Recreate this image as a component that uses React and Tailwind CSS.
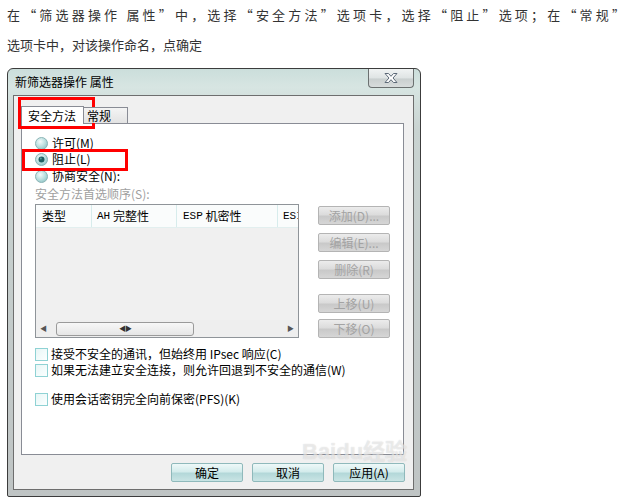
import React from 'react';

function Radio({ checked }) {
  return (
    <svg width="13" height="13" viewBox="0 0 13 13" className="shrink-0">
      <defs>
        <radialGradient id={checked ? 'rg1' : 'rg0'} cx="40%" cy="35%" r="70%">
          <stop offset="0%" stopColor="#f4fbfb" />
          <stop offset="60%" stopColor="#b9dede" />
          <stop offset="100%" stopColor="#8fc4c6" />
        </radialGradient>
      </defs>
      <circle cx="6.5" cy="6.5" r="6" fill={`url(#${checked ? 'rg1' : 'rg0'})`} stroke="#8cb4b6" strokeWidth="1" />
      {checked && <circle cx="6.5" cy="6.5" r="3" fill="#1f5f62" />}
      {checked && <circle cx="5.8" cy="5.6" r="1" fill="#5aa0a3" />}
    </svg>
  );
}

function Check() {
  return (
    <span className="w-[13px] h-[13px] shrink-0 border border-[#8fd2d4] bg-[linear-gradient(135deg,#e8f6f6,#fbffff)]" />
  );
}

function SideButton({ label }) {
  return (
    <div className="w-[72px] h-[19px] flex items-center justify-center border border-[#b4b4b4] rounded-[2px] bg-[linear-gradient(to_bottom,#ececec,#dcdcdc_45%,#c9c9c9_55%,#d6d6d6)] text-[12px] text-[#a3a3a3]">
      {label}
    </div>
  );
}

function BottomButton({ label }) {
  return (
    <div className="w-[72px] h-[19px] flex items-center justify-center border border-[#8fb9bb] rounded-[2px] bg-[linear-gradient(to_bottom,#eef8f8,#d4ecec_45%,#b3d8d9_55%,#c9e4e4)] text-[12px] text-black">
      {label}
    </div>
  );
}

export default function App() {
  return (
    <div className="relative w-[632px] h-[504px] bg-white overflow-hidden font-['Noto_Sans_CJK_SC',sans-serif]">
      {/* Instruction text */}
      <div className="pl-[7px] pr-[7px] text-[13px] leading-[30px] text-[#333]">
        <div className="text-justify [text-align-last:justify]">
          在“筛选器操作 属性”中，选择“安全方法”选项卡，选择“阻止”选项；在“常规”
        </div>
        <div>选项卡中，对该操作命名，点确定</div>
      </div>

      {/* Window */}
      <div className="ml-[7px] mt-[8px] w-[414px] h-[429px] flex flex-col border border-[#3c3c3c] rounded-t-[6px] rounded-b-[2px] bg-[linear-gradient(to_bottom,#cbdedb,#d7e5e2_18px,#c9d3d1_60px,#bfc4c4)]">
        {/* Title bar */}
        <div className="h-[26px] flex items-start justify-between">
          <div className="pl-[7px] h-[26px] flex items-center text-[12px] text-black">新筛选器操作 属性</div>
          <div className="mr-[6px] w-[46px] h-[19px] flex items-center justify-center border border-t-0 border-[#6b7070] rounded-b-[4px] bg-[linear-gradient(to_bottom,#f0f3f3,#dfe4e4_50%,#c9cfcf_55%,#d8dcdc)]">
            <svg width="16" height="12" viewBox="0 0 16 12">
              <path d="M2 1.5 H5.5 L8 4.3 L10.5 1.5 H14 L10 6 L14 10.5 H10.5 L8 7.7 L5.5 10.5 H2 L6 6 Z" fill="#fff" stroke="#5d6a78" strokeWidth="1" strokeLinejoin="round" />
            </svg>
          </div>
        </div>

        {/* Dialog body */}
        <div className="ml-[5px] mr-[6px] h-[395px] border border-[#6e6e6e] bg-[#f0f0f0] flex flex-col pl-[7px] pr-[8px] pt-[9px]">
          {/* Tabs */}
          <div className="flex items-end h-[18px] relative z-10">
            <div className="w-[63px] h-[18px] -mb-px border border-b-0 border-[#898c95] bg-white flex items-center pl-[6px] text-[12px] text-black">
              安全方法
            </div>
            <div className="w-[44px] h-[16px] border border-l-0 border-b-0 border-[#898c95] bg-[linear-gradient(to_bottom,#f4f4f4,#e3e3e3)] flex items-center pl-[3px] text-[12px] text-black">
              常规
            </div>
          </div>

          {/* Tab panel */}
          <div className="w-[383px] h-[332px] border border-[#898c95] bg-white pl-[13px] pt-[11px] flex flex-col text-[12px]">
            <div className="h-[16px] flex items-center gap-[4px] text-black">
              <Radio />
              <span>许可(M)</span>
            </div>
            <div className="h-[16px] flex items-center gap-[4px] text-black">
              <Radio checked />
              <span>阻止(L)</span>
            </div>
            <div className="mt-[1px] h-[16px] flex items-center gap-[4px] text-black">
              <Radio />
              <span>协商安全(N):</span>
            </div>
            <div className="mt-[2px] h-[16px] flex items-center text-[#a0a0a0]">安全方法首选顺序(S):</div>

            <div className="mt-[2px] flex">
              {/* List */}
              <div className="w-[264px] h-[134px] border border-[#8f9499] bg-[#f0f0f0] flex flex-col">
                <div className="h-[23px] flex bg-[#fafcfc] border-b border-[#e2efef] text-black overflow-hidden whitespace-nowrap">
                  <div className="w-[56px] shrink-0 border-r border-[#d7ecec] flex items-center pl-[6px]">类型</div>
                  <div className="w-[85px] shrink-0 border-r border-[#d7ecec] flex items-center pl-[5px]">
                    <span className="font-['Liberation_Mono',monospace] text-[11px]">AH</span>&nbsp;完整性
                  </div>
                  <div className="w-[101px] shrink-0 border-r border-[#d7ecec] flex items-center pl-[6px]">
                    <span className="font-['Liberation_Mono',monospace] text-[11px]">ESP</span>&nbsp;机密性
                  </div>
                  <div className="flex items-center pl-[5px] font-['Liberation_Mono',monospace] text-[11px]">ESI</div>
                </div>
                <div className="flex-1" />
                <div className="h-[17px] flex items-center px-[4px] bg-[#eeeeee]">
                  <span className="text-[7px] text-[#555] w-[12px]">◀</span>
                  <div className="ml-[4px] w-[138px] h-[14px] rounded-[3px] border border-[#9a9a9a] bg-[linear-gradient(to_bottom,#f7f7f7,#e6e6e6)] flex items-center justify-center">
                    <span className="text-[7px] text-[#333] tracking-[-1px]">◀▶</span>
                  </div>
                  <div className="flex-1" />
                  <span className="text-[7px] text-[#555]">▶</span>
                </div>
              </div>

              {/* Side buttons */}
              <div className="ml-[19px] pt-[2px] flex flex-col">
                <SideButton label="添加(D)..." />
                <div className="mt-[8px]"><SideButton label="编辑(E)..." /></div>
                <div className="mt-[8px]"><SideButton label="删除(R)" /></div>
                <div className="mt-[15px]"><SideButton label="上移(U)" /></div>
                <div className="mt-[6px]"><SideButton label="下移(O)" /></div>
              </div>
            </div>

            <div className="mt-[8px] h-[16px] flex items-center gap-[3px] text-black">
              <Check />
              <span>接受不安全的通讯，但始终用 IPsec 响应(C)</span>
            </div>
            <div className="h-[16px] flex items-center gap-[3px] text-black">
              <Check />
              <span>如果无法建立安全连接，则允许回退到不安全的通信(W)</span>
            </div>
            <div className="mt-[13px] h-[16px] flex items-center gap-[3px] text-black">
              <Check />
              <span>使用会话密钥完全向前保密(PFS)(K)</span>
            </div>
          </div>

          {/* Bottom buttons */}
          <div className="mt-[8px] flex justify-end gap-[9px]">
            <BottomButton label="确定" />
            <BottomButton label="取消" />
            <BottomButton label="应用(A)" />
          </div>
        </div>
      </div>

      {/* Red highlight boxes */}
      <div className="absolute left-[18px] top-[97px] w-[77px] h-[32px] border-[3px] border-[#ff0000]" />
      <div className="absolute left-[22px] top-[149px] w-[106px] h-[22px] border-[3px] border-[#ff0000]" />

      {/* Watermark */}
      <div className="absolute left-[302px] top-[440px] pointer-events-none">
        <span className="text-[22px] leading-[24px] font-bold text-white/50 [text-shadow:0_0_1px_rgba(140,140,140,0.4)] font-['Liberation_Sans','Noto_Sans_CJK_SC',sans-serif]">Baidu经验</span>
      </div>
    </div>
  );
}
